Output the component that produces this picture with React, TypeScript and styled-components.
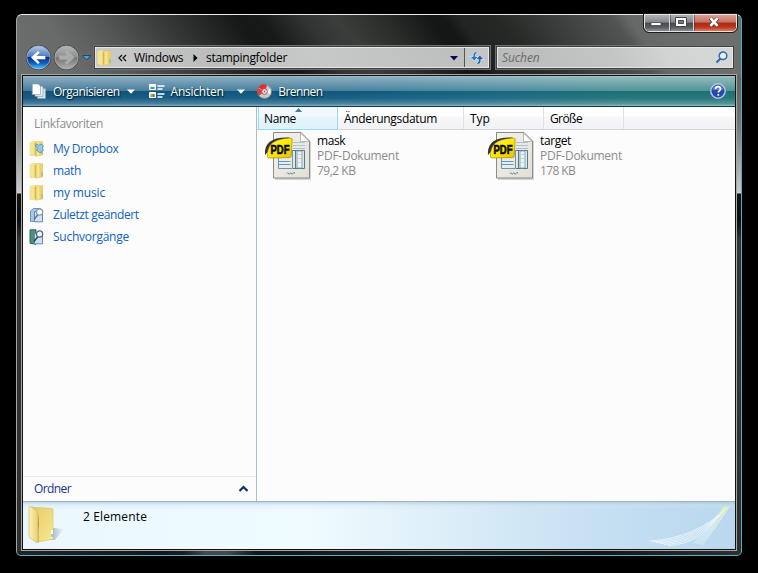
import React from "react";
import styled, { createGlobalStyle, css } from "styled-components";

const GlobalStyle = createGlobalStyle`
  * { box-sizing: border-box; }
  html, body { margin: 0; background: #000; }
  body { overflow: hidden; font: 12px/15px "Open Sans", "Noto Sans", sans-serif; color: #000; }
`;

const Desktop = styled.main`
  width: 758px;
  height: 573px;
  padding: 14px 16px 17px;
  background: #000;
`;

const Window = styled.section`
  width: 726px;
  height: 542px;
  display: flex;
  flex-direction: column;
  padding: 0 4px 4px;
  border: 1px solid;
  border-color: #e8eceb #4fb0c6 #55b4c8 #a4a6a6;
  border-radius: 6px 6px 5px 5px;
  background:
    linear-gradient(90deg, #242424, #161616 20%, #1c1c1c 23%, #484848 26%, #484848 29%, #151515 33%, #222 60%, #151515 80%, #303030) bottom / 100% 4px no-repeat,
    linear-gradient(54deg, #6d6f6e 0, #686a69 9%, #555756 16%, #343635 25%, #161817 34%, #171918 37%, #333534 43%, #3b3d3b 47%, #2b2d2b 53%, #151716 59%, #151716 61%, #222423 63%, #262826 68%, #3b3d3c 75%, #525453 83%, #666867 85%, #6c6e6d 92%, #6d6f6e 100%) top / 100% 60px no-repeat,
    linear-gradient(#6c6e6d 0, #656565 70px, #777 110px, #c9c9c9 176px, #d0cfce 178px, #131313 179px, #0c0c0c 205px, #343434 226px, #303030 100%);
`;

const TitleBar = styled.header`
  height: 29px;
  flex: none;
  display: flex;
  align-items: flex-start;
  justify-content: flex-end;
`;

const CaptionButtons = styled.div`
  display: flex;
  height: 18px;
  margin: -1px 0 0;
  border: 1px solid #e1e2e2;
  border-radius: 0 0 5px 5px;
  overflow: hidden;
  outline: 1px solid #1b1c1c;
`;

const CaptionButton = styled.button<{ $kind: "normal" | "close" }>`
  width: ${p => (p.$kind === "close" ? 43 : 24)}px;
  height: 100%;
  padding: ${p => (p.$kind === "close" ? "0 2px 2px 0" : "0 2px 2px 0")};
  border: 0;
  display: grid;
  place-items: center;
  background: ${p => p.$kind === "close" ? "linear-gradient(#d9a094, #c7715f 45%, #a92b17 50%, #b8351e 75%, #e0795c)" : "linear-gradient(#b0b2b4, #86898c 45%, #484b50 50%, #56595d 75%, #8b8e91)"};
  & + & { border-left: 1px solid #d6d6d6; box-shadow: inset 1px 0 #37373788; }
`;

const NavBar = styled.nav`
  height: 30px;
  flex: none;
  display: flex;
  align-items: flex-start;
  padding: 0 0 0 4px;
`;

const NavButtons = styled.svg`
  width: 70px;
  height: 28px;
  flex: none;
  display: block;
`;

const Field = styled.div<{ $search?: boolean }>`
  width: ${p => (p.$search ? 236 : 394)}px;
  height: 21px;
  flex: none;
  margin-top: 3px;
  margin-left: ${p => (p.$search ? 8 : 0)}px;
  display: flex;
  align-items: center;
  border: 1px solid #e6e6e6;
  outline: 1px solid #3f4040;
  box-shadow: 0 0 0 2px #6f7070;
  background: ${p => p.$search ? "linear-gradient(65deg, #b9baba, #c4c5c5 50%, #d2d3d3 72%, #d6d7d7)" : "linear-gradient(65deg, #cacbcb, #bcbdbd 30%, #c7c8c8 55%, #bebfbf 90%)"};
  ${p => p.$search && css`padding: 0 4px; justify-content: space-between;`}
`;

const Label = styled.span<{ $track?: number }>`
  white-space: pre;
  letter-spacing: ${p => p.$track ?? 0}px;
`;

const Crumb = styled(Label)<{ $gap: number }>`
  margin-left: ${p => p.$gap}px;
  width: ${p => (p.$gap === 7 ? 51 : 82)}px;
`;

const Placeholder = styled(Label)`
  font-style: italic;
  color: #6b6b6b;
`;

const Glyph = styled.svg<{ $w: number; $h: number; $ml?: number; $mt?: number }>`
  width: ${p => p.$w}px;
  height: ${p => p.$h}px;
  margin-left: ${p => p.$ml ?? 0}px;
  margin-top: ${p => p.$mt ?? 0}px;
  flex: none;
  display: block;
`;

const Refresh = styled.button`
  width: 24px;
  height: 19px;
  margin-left: auto;
  padding: 0;
  border: 0;
  border-left: 1px solid #555;
  display: grid;
  place-items: center;
  background: #c4c5c5;
`;

const Client = styled.div`
  width: 716px;
  height: 477px;
  flex: none;
  display: flex;
  flex-direction: column;
  border: 1px solid #a7a9a9;
  outline: 1px solid #111;
  outline-offset: -2px;
  padding: 1px;
  background: #fcfcfc;
`;

const Toolbar = styled.div`
  height: 31px;
  flex: none;
  display: flex;
  align-items: center;
  padding: 0 9px 0 8px;
  border-bottom: 1px solid #0c3c4a;
  color: #fff;
  text-shadow: 0 1px 2px #032536, 1px 1px 1px #06344a;
  background:
    linear-gradient(#ffffffa8 0, #ffffff80 1px, #ffffff78 3px, #ffffff38 15px, #00000008 15.5px, #ffffff08 22px, #ffffff40 28px, #ffffff88 30px),
    linear-gradient(90deg, #135680, #125b80 45%, #1b6a83 68%, #207478 85%, #207478);
`;

const ToolItem = styled.div<{ $w: number; $text: number }>`
  width: ${p => p.$w}px;
  display: grid;
  grid-template-columns: ${p => p.$text}px 1fr auto;
  align-items: center;
`;

const Body = styled.div`
  height: 394px;
  flex: none;
  display: flex;
`;

const Sidebar = styled.aside`
  width: 234px;
  flex: none;
  display: flex;
  flex-direction: column;
  border-right: 1px solid #a9bfce;
`;

const SidebarTitle = styled(Label)`
  padding: 9px 0 0 11px;
  height: 31px;
  color: #8d8d8d;
`;

const Favorite = styled.a`
  height: 22px;
  display: grid;
  grid-template-columns: 24px 1fr;
  align-items: center;
  padding: 0 0 1px 6px;
  color: #0f62c2;
`;

const FoldersBar = styled.div`
  height: 25px;
  margin-top: auto;
  display: flex;
  align-items: center;
  justify-content: space-between;
  padding: 0 7px 1px 11px;
  border-top: 1px solid #e9ebed;
  color: #15368c;
`;

const Files = styled.section`
  flex: 1;
`;

const Columns = styled.div`
  height: 23px;
  display: flex;
  padding-left: 1px;
  border-bottom: 1px solid #d5d7dc;
  background: linear-gradient(#fff 0, #fff 9px, #f6f7f9 10px, #f1f2f5);
`;

const Column = styled.div<{ $w: number; $sorted?: boolean }>`
  position: relative;
  width: ${p => p.$w}px;
  height: 22px;
  padding: 4px 0 0 6px;
  border-right: 1px solid #dfe1e5;
  ${p => p.$sorted && css`
    padding-left: 5px;
    height: 23px;
    border: solid #96d9f9;
    border-width: 0 1px 1px 1px;
    background: linear-gradient(#f2f9fc 9px, #e6f4fb 10px, #dff1fa);
  `}
`;

const SortMark = styled.svg`
  position: absolute;
  top: 1px;
  left: 36px;
  width: 7px;
  height: 4px;
`;

const FileGrid = styled.div`
  display: grid;
  grid-template-columns: 223px 223px;
  padding: 2px 0 0 7px;
`;

const FileItem = styled.article`
  display: grid;
  grid-template-columns: 53px 1fr;
`;

const FileText = styled.div`
  display: flex;
  flex-direction: column;
  padding-top: 1px;
`;

const Meta = styled(Label)`
  color: #8b8b8b;
`;

const Details = styled.footer`
  height: 48px;
  flex: none;
  display: flex;
  border-top: 1px solid #9bb4c6;
  background:
    linear-gradient(#a9c4d7aa 0, #cfe2ee66 3px, #ffffff00 8px),
    linear-gradient(90deg, #eaf8fe 0, #effbff 40%, #e4f3fa 52%, #c8e1f3 78%, #b9d7ee);
`;

const Count = styled(Label)`
  margin: 7px 0 0 17px;
  flex: 1;
`;

const FolderShape = () => (
  <g>
    <path d="M1 1.2 4 .4h9.800v13.500L8 15.200 1 14.500z" fill="#dcb94c" />
    <path d="M7 1h6.600v13L7 15.500z" fill="#ecd26d" />
    <path d="M.6 1 5 .3 7.500 1.500v14L.6 14.300z" fill="#f5e495" />
    <path d="M5.600 2.200 7.200 1v14.300l-1.600-1.300z" fill="#d8b94f" />
    <path d="M8.300 1.600h2V14.300h-2z" fill="#f8e797" />
    <path d="M13 9v4.500" stroke="#7faeb0" />
  </g>
);

const SearchShape = ({ green }: { green?: boolean }) => (
  <g>
    <path d={green ? "M1 .8h6v14.500l-6-1z" : "M1.500 4 4.500 1.500h7v10l-3 3h-7z"} fill={green ? "#4b927d" : "#a9c6e8"} stroke={green ? "#33695e" : "#6e94c4"} />
    <path d="M5.500 4.500h8v10.300h-8z" fill="#cfe1f5" stroke="#6688b8" />
    <path d="m9 7.500-4 5" stroke={green ? "#38424c" : "#66727d"} strokeWidth="1.500" />
    <circle cx="10.600" cy="5" r="3.100" fill="#eff7fd" stroke={green ? "#53616e" : "#8898ad"} strokeWidth="1.200" />
  </g>
);

type Kind = "dropbox" | "folder" | "recent" | "search";
const SideIcon = ({ kind }: { kind: Kind }) => (
  <Glyph $w={16} $h={16} viewBox="0 0 16 16">
    {(kind === "folder" || kind === "dropbox") && <FolderShape />}
    {kind === "dropbox" && <path d="m7.500 3 2.300 1.400L12 3l2.500 2-1.200 2 1.200 2.300-3.500 2.500-3.500-2.500 1-2.300-2-2z" fill="#8fcbe6" stroke="#3e86ae" strokeWidth=".7" />}
    {kind === "recent" && <SearchShape />}
    {kind === "search" && <SearchShape green />}
  </Glyph>
);

const PdfIcon = () => (
  <Glyph $w={48} $h={48} viewBox="0 0 48 48">
    <defs>
      <linearGradient id="pdfBadge" x2="1" y2="1"><stop stopColor="#fff36b" /><stop offset=".5" stopColor="#ffe900" /><stop offset="1" stopColor="#e9bd00" /></linearGradient>
      <linearGradient id="page" x2="1" y2="1"><stop stopColor="#f4f2ec" /><stop offset="1" stopColor="#e2dfd6" /></linearGradient>
    </defs>
    <path d="M11 2h28l8 8v38H11z" fill="#000" opacity=".16" />
    <path d="M9.500.5H37l8.500 8.500v37H9.500z" fill="url(#page)" stroke="#8b8a86" />
    <path d="M36.500 1v8.500H45z" fill="#fff" stroke="#aaa" strokeWidth=".8" />
    <path d="M29 10.500h12M29 13.500h12M29 16.500h12" stroke="#a9c2d0" />
    <path d="M14 28h12v7.500H14z" fill="#e6eff4" />
    <path d="M14.500 26v10.500h14V18m-14 11.500h12M14.500 32.500h12" fill="none" stroke="#6d96ad" />
    <path d="M29 18.500h11.500v18H29M31.500 18v18" fill="none" stroke="#4e7d98" />
    <path d="M33 19h5v17h-5z" fill="#eef2f2" stroke="#6c97af" strokeWidth=".8" />
    <path d="M33 22.500h5M33 26.500h5M33 30.500h5" stroke="#b4cbd7" strokeWidth=".8" />
    <path d="M23 41.500q.700-1.500 1.500 0t1.500 0 1.500 0 1.500 0 2-.5" stroke="#4d7389" fill="none" strokeWidth="1" />
    <path d="M1 23C0 10 9 4.500 26 5.500L10 13z" fill="#333" />
    <path d="M3.500 24.500C3 12 10 6.500 27 6.200q1.300 0 1.200 1.300l-1 16.500q-.1 1.600-1.700 1.600L4.700 26q-1.200 0-1.200-1.500z" fill="url(#pdfBadge)" stroke="#7f6900" strokeWidth=".5" />
    <text x="6.500" y="22" fontFamily="Liberation Sans, sans-serif" fontSize="12.500" fontWeight="900" textLength="19" lengthAdjust="spacingAndGlyphs" stroke="#211d00" strokeWidth=".7">PDF</text>
  </Glyph>
);

const favorites: { name: string; kind: Kind; track: number }[] = [
  { name: "My Dropbox", kind: "dropbox", track: -0.35 },
  { name: "math", kind: "folder", track: -0.35 },
  { name: "my music", kind: "folder", track: -0.15 },
  { name: "Zuletzt geändert", kind: "recent", track: -0.38 },
  { name: "Suchvorgänge", kind: "search", track: -0.25 },
];

const columns = [
  { name: "Name", width: 80, track: -0.4, sorted: true },
  { name: "Änderungsdatum", width: 126, track: -0.33 },
  { name: "Typ", width: 80, track: 0 },
  { name: "Größe", width: 80, track: -0.6 },
];

const files = [
  { name: "mask", size: "79,2 KB", track: -0.45, sizeTrack: -0.5 },
  { name: "target", size: "178 KB", track: -0.4, sizeTrack: -0.6 },
];

export default function App() {
  return (
    <Desktop>
      <GlobalStyle />
      <Window>
        <TitleBar>
          <CaptionButtons>
            <CaptionButton $kind="normal" aria-label="Minimieren">
              <Glyph $w={12} $h={10} viewBox="0 0 12 10"><path d="M1 5.500h10v3H1z" fill="#fff" stroke="#45484c" strokeWidth=".8" /></Glyph>
            </CaptionButton>
            <CaptionButton $kind="normal" aria-label="Maximieren">
              <Glyph $w={12} $h={10} viewBox="0 0 12 10"><path d="M.5.5h11v9H.5z" fill="#fff" stroke="#45484c" /><path d="M3.500 3.500h5v3h-5z" fill="#777a7f" stroke="#45484c" /></Glyph>
            </CaptionButton>
            <CaptionButton $kind="close" aria-label="Schließen">
              <Glyph $w={12} $h={10} viewBox="0 0 12 10"><path d="m2.200 1.200 7.600 7.600m0-7.600L2.200 8.800" stroke="#533f3f" strokeWidth="4" /><path d="m2.500 1.200 7 7.600m0-7.600-7 7.600" stroke="#fff" strokeWidth="2.600" /></Glyph>
            </CaptionButton>
          </CaptionButtons>
        </TitleBar>

        <NavBar>
          <NavButtons viewBox="0 0 70 28">
            <defs>
              <linearGradient id="back" x2="0" y2="1"><stop stopColor="#b9cbe8" /><stop offset=".46" stopColor="#4b78c0" /><stop offset=".5" stopColor="#083388" /><stop offset=".75" stopColor="#1160bd" /><stop offset="1" stopColor="#4ad0ff" /></linearGradient>
              <linearGradient id="next" x2="0" y2="1"><stop stopColor="#b5b7b7" /><stop offset=".48" stopColor="#8c8e8e" /><stop offset=".52" stopColor="#757777" /><stop offset="1" stopColor="#aeb0b0" /></linearGradient>
            </defs>
            <path d="M13.500.8q7 0 14 2 7-2 14-2c7 0 10 3 13 6h12v13H54c-4 6-8 7-12.500 7q-7 0-14-2-7 2-14 2a13 13 0 0 1 0-26z" fill="#6a6c6c" opacity=".4" />
            <circle cx="13.500" cy="13.500" r="12.500" fill="#343b48" />
            <circle cx="13.500" cy="13.500" r="11.600" fill="url(#back)" stroke="#a9b9d2" strokeWidth=".8" />
            <path d="M6 13.500 13 7l1.700 1.700-3.200 3.200h8.800v3.300h-8.800l3.200 3.200L13 20z" fill="#fff" />
            <circle cx="41.500" cy="13.500" r="12.500" fill="#3d3f3f" />
            <circle cx="41.500" cy="13.500" r="11.600" fill="url(#next)" stroke="#b1b3b3" strokeWidth=".8" />
            <path d="m49 13.500-7-6.500-1.700 1.700 3.200 3.200h-8.800v3.300h8.800l-3.200 3.200L42 20z" fill="#a8aaaa" stroke="#c3c5c5" strokeWidth=".5" />
            <path d="M57.500 11.500h8L61.500 16z" fill="#45a5e1" stroke="#1c4c74" />
          </NavButtons>
          <Field>
            <Glyph $w={15} $h={16} $ml={1} viewBox="0 0 15 16"><FolderShape /></Glyph>
            <Glyph $w={9} $h={8} $ml={6} viewBox="0 0 9 8"><path d="M4 1 1 4l3 3M8 1 5 4l3 3" fill="none" stroke="#111" strokeWidth="1.300" /></Glyph>
            <Crumb $gap={7} $track={-0.28}>Windows</Crumb>
            <Glyph $w={5} $h={8} $ml={8} viewBox="0 0 5 8"><path d="m.5 0 4 4-4 4z" /></Glyph>
            <Crumb $gap={8} $track={-0.3}>stampingfolder</Crumb>
            <Glyph $w={8} $h={5} $ml={162} $mt={1} viewBox="0 0 8 5"><path d="M0 0h8L4 4.500z" fill="#05085a" /></Glyph>
            <Refresh aria-label="Aktualisieren">
              <Glyph $w={16} $h={16} viewBox="0 0 16 16"><path d="M7.500 1.500C4.500 1.500 4 4 4 6.500H1L5.300 11l4-4.500H6.500C6.500 4 7 3 8.500 3z" fill="#2f79c3" stroke="#e4f1fb" strokeWidth=".7" /><path d="M8.500 14.500c3 0 3.500-2.500 3.500-5h3L10.800 5l-4 4.500h2.700c0 2.500-.5 3.500-2 3.500z" fill="#2564aa" stroke="#e4f1fb" strokeWidth=".7" /></Glyph>
            </Refresh>
          </Field>
          <Field $search>
            <Placeholder $track={-0.1}>Suchen</Placeholder>
            <Glyph $w={13} $h={13} viewBox="0 0 13 13"><path d="M6 7 1.500 11.500" stroke="#3469a2" strokeWidth="2" /><circle cx="8" cy="4.800" r="3.800" fill="#e4f1fa" stroke="#326ab0" strokeWidth="1.500" /></Glyph>
          </Field>
        </NavBar>

        <Client>
          <Toolbar>
            <ToolItem $w={118} $text={22}>
              <Glyph $w={17} $h={17} viewBox="0 0 17 17"><path d="M6.500 5.500h8v10h-8z" fill="#dce5ea" stroke="#849ba9" strokeWidth=".7" /><path d="M4 3.300h8v10H4z" fill="#edf2f4" stroke="#849ba9" strokeWidth=".7" /><path d="M1.300 1h6l2.200 2v8.500H1.300z" fill="#fff" stroke="#8ca1ae" strokeWidth=".7" /></Glyph>
              <Label $track={-0.48}>Organisieren</Label>
              <Glyph $w={22} $h={5} viewBox="0 0 22 5"><path d="M0 .5h8L4 4.800z" fill="#fff" /></Glyph>
            </ToolItem>
            <ToolItem $w={109} $text={22}>
              <Glyph $w={16} $h={15} viewBox="0 0 16 15"><path d="M.5.5h6v5h-6zM.5 8.500h6v5h-6z" fill="#eef6ee" stroke="#fff" /><path d="M1.500 3h4v2h-4z" fill="#4498a9" /><path d="M1.500 10h2v3h-2z" fill="#d69639" /><path d="M3.500 10h2v3h-2z" fill="#3f8750" /><path d="M8.500 2h7M8.500 5h5M8.500 10h7M8.500 13h5" stroke="#fff" strokeWidth="1.300" /></Glyph>
              <Label $track={-0.24}>Ansichten</Label>
              <Glyph $w={20} $h={5} viewBox="0 0 20 5"><path d="M0 .5h8L4 4.800z" fill="#fff" /></Glyph>
            </ToolItem>
            <ToolItem $w={80} $text={21}>
              <Glyph $w={15} $h={15} viewBox="0 0 15 15"><circle cx="7.500" cy="7.500" r="7" fill="#c6c7c8" stroke="#77868d" strokeWidth=".7" /><path d="M7.500 7.500 1.500 3.500C4-.3 8-.3 10 1.500z" fill="#ec2a28" /><path d="M7.500 7.500 1.500 12A7 7 0 0 1 1 4z" fill="#c54845" /><path d="m7.500 7.500 6-3v6z" fill="#f3f3f3" /><circle cx="7.500" cy="7.500" r="2.800" fill="#f5eeee" stroke="#b94742" /><circle cx="7.500" cy="7.500" r="1" fill="#71777b" /></Glyph>
              <Label $track={-0.55}>Brennen</Label>
            </ToolItem>
            <Glyph $w={16} $h={16} $ml={373} viewBox="0 0 16 16"><circle cx="8" cy="8" r="7.200" fill="#2648b0" stroke="#b7c9df" strokeWidth="1.400" /><path d="M2.300 7a5.800 5.800 0 0 1 11.400 0z" fill="#597dcb" /><path d="M5.500 6c0-3.200 5-3.200 5 0 0 1.800-2.200 1.700-2.200 3.600M8.300 11v1.800" fill="none" stroke="#fff" strokeWidth="1.700" /></Glyph>
          </Toolbar>

          <Body>
            <Sidebar>
              <SidebarTitle $track={-0.32}>Linkfavoriten</SidebarTitle>
              {favorites.map(f => (
                <Favorite key={f.name}><SideIcon kind={f.kind} /><Label $track={f.track}>{f.name}</Label></Favorite>
              ))}
              <FoldersBar>
                <Label $track={-0.6}>Ordner</Label>
                <Glyph $w={11} $h={7} viewBox="0 0 11 7"><path d="m1.500 6 4-4 4 4" fill="none" stroke="#082d7d" strokeWidth="2.200" /></Glyph>
              </FoldersBar>
            </Sidebar>
            <Files>
              <Columns>
                {columns.map(c => (
                  <Column key={c.name} $w={c.width} $sorted={c.sorted}>
                    <Label $track={c.track}>{c.name}</Label>
                    {c.sorted && <SortMark viewBox="0 0 7 4"><path d="M0 4 3.500 0 7 4z" fill="#477c98" /></SortMark>}
                  </Column>
                ))}
              </Columns>
              <FileGrid>
                {files.map(f => (
                  <FileItem key={f.name}>
                    <PdfIcon />
                    <FileText>
                      <Label $track={f.track}>{f.name}</Label>
                      <Meta $track={-0.26}>PDF-Dokument</Meta>
                      <Meta $track={f.sizeTrack}>{f.size}</Meta>
                    </FileText>
                  </FileItem>
                ))}
              </FileGrid>
            </Files>
          </Body>

          <Details>
            <Glyph $w={38} $h={40} $ml={5} $mt={3} viewBox="0 0 38 40">
              <defs>
                <linearGradient id="cover" x2="1"><stop stopColor="#fdf3b8" /><stop offset="1" stopColor="#e8cf70" /></linearGradient>
                <linearGradient id="inside" x2="1" y2="1"><stop stopColor="#e3ca6c" /><stop offset="1" stopColor="#fae98e" /></linearGradient>
                <linearGradient id="shade" gradientUnits="userSpaceOnUse" x1="22" x2="36" y1="0" y2="0"><stop stopColor="#718390" stopOpacity=".6" /><stop offset="1" stopColor="#718390" stopOpacity="0" /></linearGradient>
              </defs>
              <path d="M18 34 25 23 36 24 27 35z" fill="url(#shade)" />
              <path d="M3 2 24 3.500q1 0 1 1V34l-15 3z" fill="url(#inside)" stroke="#d1b555" strokeWidth=".5" />
              <path d="M1 2.500Q1 1 2.500 1.500L9 6q1 1 1 3v28q0 1.500-1.500.5L2 33q-1-1-1-2z" fill="url(#cover)" stroke="#ceb35b" strokeWidth=".6" />
              <path d="M10 8q1 8 1 13-1 2-.5 16l-.5-.5z" fill="#b99836" />
              <path d="M24 25v8" stroke="#fff" strokeWidth="1.600" />
              <path d="M24 29v3" stroke="#61a5b8" strokeWidth="1.200" />
            </Glyph>
            <Count $track={0.14}>2 Elemente</Count>
            <Glyph $w={86} $h={42} $mt={3} viewBox="0 0 86 42">
              {[0, 1, 2, 3, 4, 5].map(i => <path key={i} d={`M${-1 + i * 4} ${36 + i * .9}Q${46 + i * 1.5} ${34 + i} ${79 - i * 2} ${2 + i * 1.5}`} fill="none" stroke="#f1fafd" strokeWidth=".9" opacity=".85" />)}
              {[0, 1, 2, 3, 4].map(i => <path key={i} d={`M${45 + i * 2} ${38 + i * .5}Q${61 + i} ${25} ${76 + i} 2`} fill="none" stroke="#eef9f9" strokeWidth=".8" opacity=".85" />)}
              <path d="m63 25 12-18 4-5h-4l-6 8" fill="none" stroke="#d3eebc" strokeWidth="1.300" />
            </Glyph>
          </Details>
        </Client>
      </Window>
    </Desktop>
  );
}
